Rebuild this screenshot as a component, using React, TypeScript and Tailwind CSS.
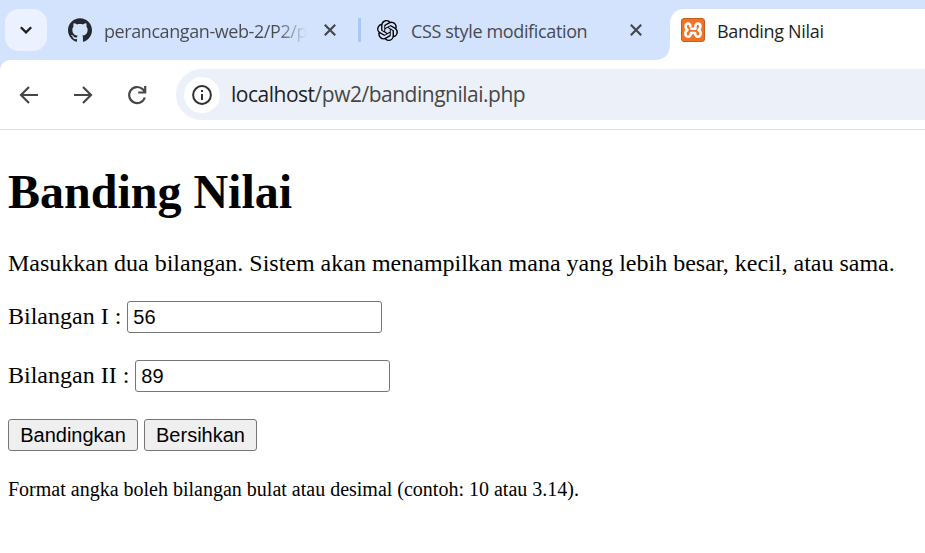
import type { ReactNode } from "react";
import { SiGithub, SiOpenai } from "react-icons/si";

const ui = "font-['Open_Sans','Noto_Sans',sans-serif]";

function CloseIcon() {
  return (
    <svg className="h-3 w-3 shrink-0" viewBox="0 0 12 12" fill="none" stroke="#45474a" strokeWidth="2.2">
      <path d="M.8.8 11.2 11.2M11.2.8.8 11.2" />
    </svg>
  );
}

function NavIcon({ children }: { children: ReactNode }) {
  return (
    <svg className="h-6 w-6 shrink-0" viewBox="0 0 24 24" fill="none" stroke="#474747" strokeWidth="2.2">
      {children}
    </svg>
  );
}

function TabStrip() {
  return (
    <div className="flex h-[60px] bg-[#d3e3fd] pt-[9px]">
      <div className="ml-[5px] flex h-[42px] w-[42px] shrink-0 items-center justify-center rounded-[14px] bg-[#ebf1fe]">
        <svg className="h-2 w-3" viewBox="0 0 12 8" fill="none" stroke="#1f1f1f" strokeWidth="2.3">
          <path d="M.8 1.2 6 6.4 11.2 1.2" />
        </svg>
      </div>
      <div className="ml-[21px] flex h-[42px] w-[270px] shrink-0 items-center">
        <SiGithub className="h-6 w-6 shrink-0 text-[#24292f]" />
        <span className="ml-3 w-[205px] overflow-hidden whitespace-nowrap bg-[linear-gradient(to_right,#474a50_84%,transparent_99%)] bg-clip-text pt-[3px] text-[18px] tracking-[-0.42px] text-transparent">
          perancangan-web-2/P2/p
        </span>
        <span className="ml-[15px]"><CloseIcon /></span>
      </div>
      <div className="mt-[9px] ml-5 h-6 w-[3px] shrink-0 bg-[#a8c7fa]" />
      <div className="ml-[15px] flex h-[42px] w-[278px] shrink-0 items-center">
        <SiOpenai className="ml-[0.5px] h-[21px] w-[21px] shrink-0 text-black" />
        <span className="ml-[13.5px] w-[200px] whitespace-nowrap pt-[3px] text-[18px] tracking-[-0.36px] text-[#474a50]">CSS style modification</span>
        <span className="ml-[19px]"><CloseIcon /></span>
      </div>
      <svg className="-mr-px h-4 w-[17px] shrink-0 self-end" viewBox="0 0 17 16" fill="#fff">
        <path d="M0 16Q16 16 16 0H17V16Z" />
      </svg>
      <div className="flex flex-1 rounded-tl-[14px] bg-white pl-[11px]">
        <span className="mt-[9px] flex h-6 w-6 items-center justify-center rounded-[3px] border border-[#c65e20] bg-[#f27222]">
          <svg className="h-5 w-5" viewBox="0 0 20 20" fill="none" stroke="#fff" strokeWidth="2.6" strokeLinecap="round" strokeLinejoin="round">
            <path d="M7.4 6.2C7.4 2.6 2.4 2.6 2.6 6.4C2.6 8 3.3 9 4.5 10C1 12 2.2 16.8 5.2 16.8C7.6 16.8 7.8 14.6 8 13H12C12.2 14.6 12.4 16.8 14.8 16.8C17.8 16.8 19 12 15.5 10C16.7 9 17.4 8 17.4 6.4C17.6 2.6 12.4 2.6 12.4 6.2V8.8H8.4" />
          </svg>
        </span>
        <span className="ml-3 whitespace-nowrap pt-[10px] text-[18px] leading-[25px] tracking-[-0.33px] text-[#1f1f1f]">Banding Nilai</span>
      </div>
    </div>
  );
}

function Toolbar() {
  return (
    <div className="bg-[#d3e3fd]">
      <div className="flex h-[70px] items-center rounded-tl-[10px] border-b border-[#dfe1e4] bg-white pl-[17px]">
        <NavIcon><path d="M21 12H4.5M12 4 4 12l8 8" /></NavIcon>
        <span className="ml-[30px] flex"><NavIcon><path d="M3 12h16.5M12 4l8 8-8 8" /></NavIcon></span>
        <span className="ml-[30px] flex">
          <NavIcon>
            <path d="M19.8 14.5a8 8 0 1 1-2-8.2L20.2 9M20.2 3v6.5h-7" />
          </NavIcon>
        </span>
        <div className="ml-[27px] flex h-[51px] flex-1 items-center rounded-l-full bg-[#ecf0f9] pl-2">
          <span className="flex h-9 w-9 items-center justify-center rounded-full bg-white">
            <svg className="h-5 w-5" viewBox="0 0 20 20" fill="none" stroke="#303134" strokeWidth="2">
              <circle cx="10" cy="10" r="8.9" />
              <path d="M10 9v6M10 5v2.1" />
            </svg>
          </span>
          <span className="ml-[11px] whitespace-nowrap text-[21px] tracking-[-0.49px] text-[#474747]">
            <span className="text-[#1f1f1f]">localhost</span>/pw2/bandingnilai.php
          </span>
        </div>
      </div>
    </div>
  );
}

function NumberField({ label, value }: { label: string; value: string }) {
  return (
    <label className="flex h-8 items-center gap-[6px]">
      <span className="whitespace-nowrap pb-0.5">{label}</span>
      <input
        defaultValue={value}
        className="h-8 w-[255px] rounded-[3px] border border-[#767676] bg-white px-[5px] font-['Liberation_Sans',Arial,sans-serif] text-[20px] outline-none"
      />
    </label>
  );
}

function FormButton({ children, width }: { children: ReactNode; width: string }) {
  return (
    <button type="button" className={`${width} h-8 rounded-[3px] border border-[#767676] bg-[#efefef] text-center font-['Liberation_Sans',Arial,sans-serif] text-[20px] leading-[30px]`}>
      {children}
    </button>
  );
}

export default function App() {
  return (
    <div className="h-[553px] w-[925px] overflow-hidden bg-white">
      <header className={ui}>
        <TabStrip />
        <Toolbar />
      </header>
      <main className="px-2 pt-[34px] font-['Liberation_Serif','Times_New_Roman',serif] text-[24px] leading-[27px] text-black">
        <h1 className="text-[48px] leading-[55px] font-bold">Banding Nilai</h1>
        <p className="mt-[31px] whitespace-nowrap">
          Masukkan dua bilangan. Sistem akan menampilkan mana yang lebih besar, kecil, atau sama.
        </p>
        <form className="mt-6">
          <NumberField label="Bilangan I :" value="56" />
          <div className="mt-[27px]"><NumberField label="Bilangan II :" value="89" /></div>
          <div className="mt-[27px] flex gap-[6px]">
            <FormButton width="w-[130px]">Bandingkan</FormButton>
            <FormButton width="w-[113px]">Bersihkan</FormButton>
          </div>
        </form>
        <p className="mt-[25px] text-[20px]">Format angka boleh bilangan bulat atau desimal (contoh: 10 atau 3.14).</p>
      </main>
    </div>
  );
}
